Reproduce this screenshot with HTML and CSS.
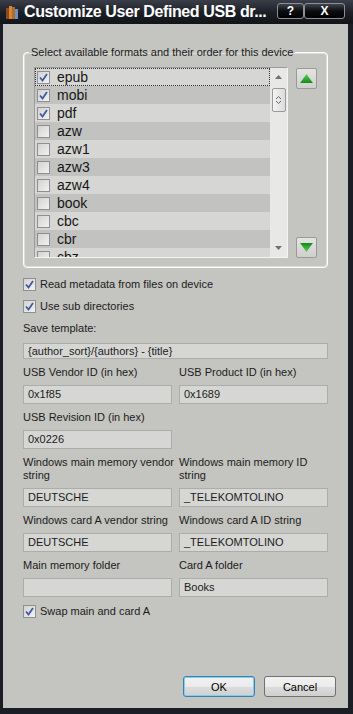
FILE: index.html
```html
<!DOCTYPE html>
<html>
<head>
    <meta charset="UTF-8">
    <meta name="viewport" content="width=device-width, initial-scale=1.0">
    <link rel="stylesheet" href="styles.css">
</head>
<body>
    <div class="window">
        <!-- Заголовок окна -->
        <div class="titlebar">
            <svg class="app-icon" viewBox="0 0 15 16">
                <rect x="1" y="4" width="3" height="11" fill="#8a4b22"/>
                <rect x="4" y="2" width="3" height="13" fill="#d8862e"/>
                <rect x="7" y="3" width="3" height="12" fill="#b06a2c"/>
                <rect x="10" y="5" width="3" height="10" fill="#6d8fc8"/>
            </svg>
            <span class="title">Customize User Defined USB dr...</span>
            <div class="caption-buttons">
                <span class="cap help">?</span>
                <span class="cap close">X</span>
            </div>
        </div>

        <div class="client">
            <!-- Форматы -->
            <fieldset class="formats">
                <legend>Select available formats and their order for this device</legend>
                <div class="formats-body">
                    <div class="listbox">
                        <ul class="items">
                            <li class="focus"><span class="check on"><svg viewBox="0 0 11 11"><path d="M2 5.5 L4.5 8.5 L9 2" /></svg></span>epub</li>
                            <li><span class="check on"><svg viewBox="0 0 11 11"><path d="M2 5.5 L4.5 8.5 L9 2" /></svg></span>mobi</li>
                            <li><span class="check on"><svg viewBox="0 0 11 11"><path d="M2 5.5 L4.5 8.5 L9 2" /></svg></span>pdf</li>
                            <li><span class="check"></span>azw</li>
                            <li><span class="check"></span>azw1</li>
                            <li><span class="check"></span>azw3</li>
                            <li><span class="check"></span>azw4</li>
                            <li><span class="check"></span>book</li>
                            <li><span class="check"></span>cbc</li>
                            <li><span class="check"></span>cbr</li>
                            <li><span class="check"></span>cbz</li>
                        </ul>
                        <div class="scrollbar">
                            <span class="sb-arrow"><svg viewBox="0 0 7 4"><path d="M0 4 L3.5 0 L7 4 Z" /></svg></span>
                            <span class="sb-thumb"><svg viewBox="0 0 7 10"><path d="M1 4 L3.5 1.5 L6 4 M1 6 L3.5 8.5 L6 6" /></svg></span>
                            <span class="sb-space"></span>
                            <span class="sb-arrow"><svg viewBox="0 0 7 4"><path d="M0 0 L3.5 4 L7 0 Z" /></svg></span>
                        </div>
                    </div>
                    <div class="move-buttons">
                        <span class="move"><svg viewBox="0 0 16 12"><defs><linearGradient id="gu" x1="0" y1="0" x2="0" y2="1"><stop offset="0" stop-color="#5fd15f"/><stop offset="1" stop-color="#138a13"/></linearGradient></defs><path d="M1 11 L8 1 L15 11 Z" fill="url(#gu)"/></svg></span>
                        <span class="move"><svg viewBox="0 0 16 12"><defs><linearGradient id="gd" x1="0" y1="0" x2="0" y2="1"><stop offset="0" stop-color="#138a13"/><stop offset="1" stop-color="#5fd15f"/></linearGradient></defs><path d="M1 1 L8 11 L15 1 Z" fill="url(#gd)"/></svg></span>
                    </div>
                </div>
            </fieldset>

            <div class="check-row first"><span class="check on"><svg viewBox="0 0 11 11"><path d="M2 5.5 L4.5 8.5 L9 2" /></svg></span>Read metadata from files on device</div>
            <div class="check-row"><span class="check on"><svg viewBox="0 0 11 11"><path d="M2 5.5 L4.5 8.5 L9 2" /></svg></span>Use sub directories</div>

            <div class="label template-label">Save template:</div>
            <div class="input template">{author_sort}/{authors} - {title}</div>

            <!-- Поля устройства -->
            <div class="fields">
                <div class="field">
                    <div class="label">USB Vendor ID (in hex)</div>
                    <div class="input">0x1f85</div>
                </div>
                <div class="field">
                    <div class="label">USB Product ID (in hex)</div>
                    <div class="input">0x1689</div>
                </div>
                <div class="field">
                    <div class="label">USB Revision ID (in hex)</div>
                    <div class="input">0x0226</div>
                </div>
                <div class="field"></div>
                <div class="field">
                    <div class="label">Windows main memory vendor<br>string</div>
                    <div class="input">DEUTSCHE</div>
                </div>
                <div class="field">
                    <div class="label">Windows main memory ID<br>string</div>
                    <div class="input">_TELEKOMTOLINO</div>
                </div>
                <div class="field">
                    <div class="label">Windows card A vendor string</div>
                    <div class="input">DEUTSCHE</div>
                </div>
                <div class="field">
                    <div class="label">Windows card A ID string</div>
                    <div class="input">_TELEKOMTOLINO</div>
                </div>
                <div class="field">
                    <div class="label">Main memory folder</div>
                    <div class="input"></div>
                </div>
                <div class="field">
                    <div class="label">Card A folder</div>
                    <div class="input">Books</div>
                </div>
            </div>

            <div class="check-row swap"><span class="check on"><svg viewBox="0 0 11 11"><path d="M2 5.5 L4.5 8.5 L9 2" /></svg></span>Swap main and card A</div>

            <div class="dialog-buttons">
                <span class="btn default">OK</span>
                <span class="btn">Cancel</span>
            </div>
        </div>
    </div>
</body>
</html>
```

FILE: styles.css
```css
body {
    margin: 0;
    background: #1a1d24;
    font-family: "Liberation Sans", Arial, sans-serif;
}

.window {
    width: 353px;
    height: 714px;
    display: flex;
    flex-direction: column;
    background: #1b1e25;
}

.titlebar {
    height: 24px;
    display: flex;
    align-items: center;
    padding-left: 5px;
    color: white;
    background: linear-gradient(#3a3e48, #1b1e25 55%, #121419);
}

.app-icon {
    width: 15px;
    height: 16px;
    margin-right: 4px;
}

.title {
    flex: 1;
    font-size: 16px;
    font-weight: bold;
    letter-spacing: -0.4px;
    white-space: nowrap;
}

.caption-buttons {
    display: flex;
    align-self: flex-start;
    margin-top: 3px;
    margin-right: 8px;
}

.cap {
    height: 16px;
    box-sizing: border-box;
    border: 1px solid #8c8f96;
    border-radius: 3px;
    background: linear-gradient(#40444c, #0c0d10 50%, #000);
    font-size: 12px;
    font-weight: bold;
    display: flex;
    align-items: center;
    justify-content: center;
}

.help {
    width: 27px;
}

.close {
    width: 41px;
}

.client {
    flex: 1;
    margin: 0 5px 6px 3px;
    padding: 0 20px;
    background: #c4c4c0;
    color: #1c1c1c;
    font-size: 11px;
    display: flex;
    flex-direction: column;
}

/* группа форматов */
.formats {
    margin: 22px 0 0;
    padding: 8px 10px 9px 10px;
    border: 1px solid #fff;
    border-radius: 4px;
    box-shadow: inset 0 0 0 1px #dcdcda;
    min-width: 0;
}

.formats legend {
    margin-left: -5px;
    padding: 0 2px;
    line-height: 13px;
}

.formats-body {
    display: flex;
    gap: 8px;
}

.listbox {
    width: 254px;
    height: 191px;
    box-sizing: border-box;
    border: 1px solid;
    border-color: #9c9c9a #f4f4f4 #f4f4f4 #9c9c9a;
    display: flex;
    overflow: hidden;
}

.items {
    list-style: none;
    margin: 0;
    padding: 0;
    width: 235px;
}

.items li {
    height: 18px;
    display: flex;
    align-items: center;
    padding-left: 2px;
    font-size: 14px;
    color: #161616;
    box-sizing: border-box;
}

.items li:nth-child(odd) {
    background: #d6d6d4;
}

.items li:nth-child(even) {
    background: #c2c2c0;
}

.items li.focus {
    outline: 1px dotted #333;
    outline-offset: -1px;
}

.items .check {
    margin-right: 7px;
}

.check {
    width: 13px;
    height: 13px;
    box-sizing: border-box;
    border: 1px solid #8f8f8f;
    background: linear-gradient(135deg, #d2d2d2, #f2f2f2);
    display: flex;
    align-items: center;
    justify-content: center;
    flex-shrink: 0;
}

.check svg {
    width: 11px;
    height: 11px;
}

.check svg path {
    fill: none;
    stroke: #3f5a9e;
    stroke-width: 1.8;
}

.scrollbar {
    width: 17px;
    background: #e8e8e6;
    display: flex;
    flex-direction: column;
    align-items: center;
}

.sb-arrow {
    height: 18px;
    display: flex;
    align-items: center;
    justify-content: center;
}

.sb-arrow svg {
    width: 7px;
    height: 4px;
    fill: #707070;
}

.sb-thumb {
    margin-top: 2px;
    width: 14px;
    height: 24px;
    box-sizing: border-box;
    border: 1px solid #9a9a9a;
    border-radius: 2px;
    background: linear-gradient(90deg, #f4f4f4, #dcdcdc);
    display: flex;
    align-items: center;
    justify-content: center;
}

.sb-thumb svg {
    width: 7px;
    height: 10px;
}

.sb-thumb path {
    fill: none;
    stroke: #666;
    stroke-width: 1;
}

.sb-space {
    flex: 1;
}

.move-buttons {
    display: flex;
    flex-direction: column;
    justify-content: space-between;
    padding: 1px 0 0;
}

.move {
    width: 21px;
    height: 21px;
    box-sizing: border-box;
    border: 1px solid #9a9a98;
    border-radius: 2px;
    background: linear-gradient(#e4e4e2, #cfcfcd);
    display: flex;
    align-items: center;
    justify-content: center;
}

.move svg {
    width: 15px;
    height: 11px;
}

/* флажки */
.check-row {
    height: 14px;
    display: flex;
    align-items: center;
    margin-top: 8px;
    white-space: nowrap;
}

.check-row .check {
    margin-right: 4px;
}

.check-row.first {
    margin-top: 9px;
}

.check-row.swap {
    margin-top: 7px;
}

.label {
    line-height: 13px;
    white-space: nowrap;
}

.template-label {
    margin-top: 9px;
}

.input {
    height: 19px;
    box-sizing: border-box;
    border: 1px solid #acacaa;
    background: #d6d6d4;
    padding: 0 4px;
    line-height: 17px;
    white-space: nowrap;
    margin-top: 6px;
}

.input.template {
    height: 16px;
    line-height: 14px;
    margin-top: 8px;
}

.fields {
    margin-top: 7px;
    display: grid;
    grid-template-columns: 1fr 1fr;
    gap: 7px;
}

.field {
    display: flex;
    flex-direction: column;
    justify-content: flex-end;
    min-width: 0;
}

.dialog-buttons {
    margin-top: auto;
    margin-bottom: 11px;
    margin-right: -8px;
    display: flex;
    justify-content: flex-end;
    gap: 9px;
}

.btn {
    width: 72px;
    height: 21px;
    box-sizing: border-box;
    border: 1px solid #707070;
    border-radius: 3px;
    background: linear-gradient(#f2f2f2, #ebebeb 50%, #dddddd 50%, #cfcfcf);
    display: flex;
    align-items: center;
    justify-content: center;
    color: #000;
}

.btn.default {
    border-color: #3c7fb1;
    box-shadow: inset 0 0 0 1px #7fd0f0;
}
```
